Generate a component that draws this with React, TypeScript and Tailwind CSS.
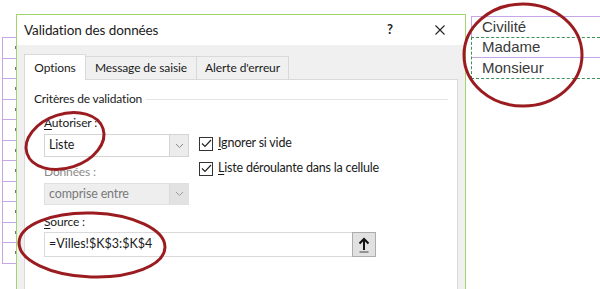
import React from 'react'

const sheetRows = Array.from({ length: 11 })

function Chevron({ color = '#8a8a8a' }: { color?: string }) {
  return (
    <svg width="9" height="6" viewBox="0 0 9 6" fill="none">
      <path d="M1 1l3.5 3.5L8 1" stroke={color} strokeWidth="1" />
    </svg>
  )
}

function Checkbox({ label, accel }: { label: string; accel: string }) {
  return (
    <div className="flex items-center gap-[5px] h-[13px]">
      <div className="w-[14px] h-[14px] border border-[#333] bg-white flex items-center justify-center">
        <svg width="11" height="9" viewBox="0 0 11 9" fill="none">
          <path d="M1 4.5l3 3L10 1" stroke="#222" strokeWidth="1.2" />
        </svg>
      </div>
      <span className="text-[12.5px] tracking-[-0.2px] text-[#1a1a1a]">
        <span className="underline underline-offset-2">{accel}</span>
        {label}
      </span>
    </div>
  )
}

export default function App() {
  return (
    <div className="relative w-[600px] h-[289px] overflow-hidden bg-white flex font-['Lato',sans-serif]">
      {/* sheet sliver on the left */}
      <div className="w-[16px] pt-[37px] flex-shrink-0">
        <div className="ml-[2px] border-l border-b border-[#c6a6e6]">
          {sheetRows.map((_, i) => (
            <div key={i} className="h-[20.5px] border-t border-[#c6a6e6] flex items-center justify-end">
              <span className="w-px h-[3px] bg-[#777]" />
            </div>
          ))}
        </div>
      </div>

      {/* Dialog */}
      <div className="mt-[14px] w-[450px] h-[290px] flex-shrink-0 border border-[#a6d46c] bg-[#f0f0f0] flex flex-col">
        {/* Title bar */}
        <div className="h-[30px] bg-white flex items-center pl-[7px] flex-shrink-0">
          <span className="text-[13.5px] tracking-[-0.1px] text-[#1a1a1a]">Validation des données</span>
          <span className="ml-auto text-[13px] text-[#222] font-bold">?</span>
          <svg className="ml-[42px] mr-[20px]" width="10" height="10" viewBox="0 0 10 10" fill="none">
            <path d="M0.5 0.5l9 9M9.5 0.5l-9 9" stroke="#222" strokeWidth="1.1" />
          </svg>
        </div>

        {/* Body */}
        <div className="flex-1 px-[7px] pt-[9px] flex flex-col">
          {/* Tabs */}
          <div className="flex items-end h-[25px] text-[12px] tracking-[-0.1px] text-[#1a1a1a]">
            <div className="relative z-10 w-[62px] h-[26px] -mb-px bg-white border border-b-0 border-[#d9d9d9] flex items-center justify-center">
              Options
            </div>
            <div className="w-[111px] h-[23px] border-t border-r border-[#d9d9d9] flex items-center justify-center">
              Message de saisie
            </div>
            <div className="w-[92px] h-[23px] border-t border-r border-[#d9d9d9] flex items-center justify-center">
              Alerte d'erreur
            </div>
          </div>

          {/* Panel */}
          <div className="flex-1 bg-white border border-[#d9d9d9] pl-[9px] pr-[9px] pt-[11px] text-[12px] tracking-[-0.15px] text-[#1a1a1a]">
            <div className="flex items-center gap-[4px] h-[16px]">
              <span>Critères de validation</span>
              <div className="flex-1 h-px bg-[#e3e3e3]" />
            </div>

            <div className="pl-[10px] mt-[8px] flex">
              <div className="w-[145px] flex-shrink-0">
                <div className="h-[16px] leading-[16px]">
                  <span className="underline underline-offset-2">A</span>utoriser :
                </div>
                <div className="mt-[3px] h-[23px] border border-[#d4d4d4] bg-white flex text-[12.5px]">
                  <div className="flex-1 pl-[4px] flex items-center">Liste</div>
                  <div className="w-[19px] border-l border-[#d4d4d4] bg-[#ececec] flex items-center justify-center">
                    <Chevron />
                  </div>
                </div>
                <div className="mt-[7px] h-[16px] leading-[16px] text-[#8a8a8a]">Données :</div>
                <div className="mt-[3px] h-[22px] border border-[#e0e0e0] bg-[#eeeeee] flex text-[#7a7a7a] text-[12.5px]">
                  <div className="flex-1 pl-[4px] flex items-center">comprise entre</div>
                  <div className="w-[19px] border-l border-[#d9d9d9] bg-[#e2e2e2] flex items-center justify-center">
                    <Chevron color="#9a9a9a" />
                  </div>
                </div>
              </div>

              <div className="ml-[10px] pt-[22px] flex flex-col gap-[12px]">
                <Checkbox accel="I" label="gnorer si vide" />
                <Checkbox accel="L" label="iste déroulante dans la cellule" />
              </div>
            </div>

            <div className="pl-[10px] mt-[9px]">
              <div className="h-[16px] leading-[16px]">
                <span className="underline underline-offset-2">S</span>ource :
              </div>
              <div className="mt-[2px] flex h-[25px]">
                <div className="w-[308px] border border-[#d9d9d9] border-r-0 pl-[4px] flex items-center text-[12.5px] tracking-normal">
                  =Villes!$K$3:$K$4
                </div>
                <div className="w-[24px] border border-[#adadad] bg-[#e1e1e1] flex items-center justify-center">
                  <svg width="12" height="16" viewBox="0 0 12 16" fill="none">
                    <path d="M6 13V2.5M1.5 6.5L6 2l4.5 4.5" stroke="#111" strokeWidth="2" />
                    <path d="M1.5 15h9" stroke="#444" strokeWidth="1" />
                  </svg>
                </div>
              </div>
            </div>
          </div>
        </div>
      </div>

      {/* sheet column on the right */}
      <div className="ml-[5px] mt-[16px] flex-1 text-[15px] text-[#3a3a3a] font-['Liberation_Sans',sans-serif]">
        <div className="h-[21px] border-t border-l border-[#c6a6e6] pl-[10px] flex items-center">Civilité</div>
        <div className="border border-dashed border-[#3f8f5a] border-r-0">
          <div className="h-[20px] pl-[10px] flex items-center border-b border-[#c6a6e6]">Madame</div>
          <div className="h-[20px] pl-[10px] flex items-center">Monsieur</div>
        </div>
      </div>

      {/* red annotation circles */}
      <svg className="absolute inset-0 pointer-events-none" width="600" height="289" viewBox="0 0 600 289" fill="none">
        <ellipse cx="523" cy="55" rx="59" ry="51" stroke="#9b1c20" strokeWidth="3" />
        <ellipse cx="65" cy="141" rx="40" ry="27" transform="rotate(-18 65 141)" stroke="#9b1c20" strokeWidth="3" />
        <ellipse cx="92" cy="245" rx="73" ry="32" transform="rotate(2 92 245)" stroke="#9b1c20" strokeWidth="3" />
      </svg>
    </div>
  )
}
